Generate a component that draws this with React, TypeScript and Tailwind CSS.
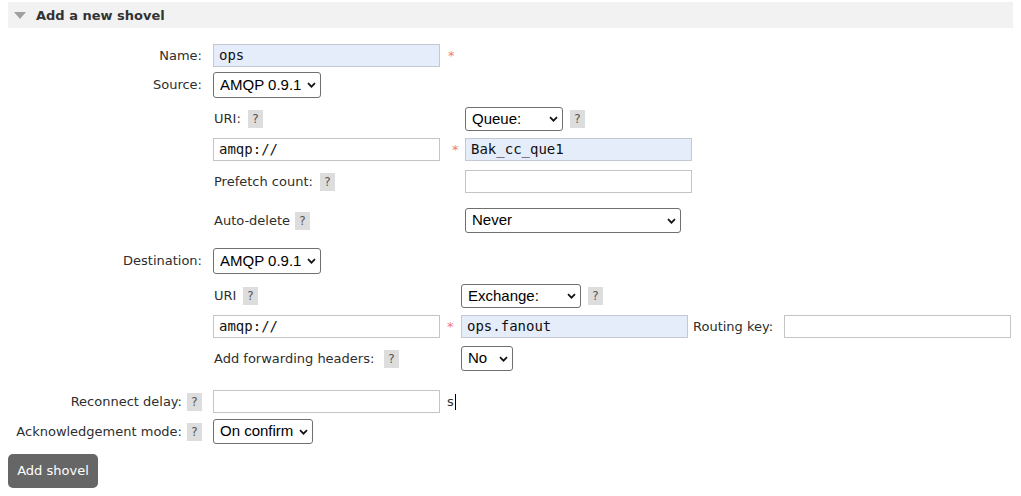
import React from 'react';

const Help: React.FC<{ className?: string }> = ({ className = '' }) => (
  <span
    className={`inline-flex h-[18px] w-[15px] shrink-0 items-center justify-center bg-[#dddddd] text-[12px] leading-none text-[#555] ${className}`}
  >
    ?
  </span>
);

const Star: React.FC<{ className?: string }> = ({ className = '' }) => (
  <span className={`text-[13px] leading-none text-[#f47a7a] ${className}`}>*</span>
);

// text box drawn as a div so the mono underscores are not clipped
const TextInput: React.FC<{ value?: string; mand?: boolean }> = ({ value = '', mand }) => (
  <div
    role="textbox"
    className={`flex h-[23px] w-[227px] shrink-0 items-center overflow-hidden whitespace-pre border px-[5px] font-['DejaVu_Sans_Mono',monospace] text-[14px] leading-[19px] text-[#111] ${
      mand ? 'border-[#c3c9d2] bg-[#e5edfa]' : 'border-[#c4c4c4] bg-white'
    }`}
  >
    {value}
  </div>
);

interface SelectProps {
  value: string;
  options: string[];
  size: string;
}

const Select: React.FC<SelectProps> = ({ value, options, size }) => (
  <div className={`relative shrink-0 ${size}`}>
    <select
      defaultValue={value}
      className="h-full w-full appearance-none rounded-[3px] border border-[#6f6f6f] bg-white pl-[6px] font-['Liberation_Sans',Arial,sans-serif] text-[15px] text-black outline-none"
    >
      {options.map((o) => (
        <option key={o}>{o}</option>
      ))}
    </select>
    <svg
      className="pointer-events-none absolute right-[5px] top-1/2 -translate-y-1/2"
      width="9"
      height="6"
      viewBox="0 0 9 6"
    >
      <path d="M1 1.2 L4.5 4.7 L8 1.2" fill="none" stroke="#111" strokeWidth="1.7" />
    </svg>
  </div>
);

const Row: React.FC<{ className: string; label?: React.ReactNode; children: React.ReactNode }> = ({
  className,
  label,
  children,
}) => (
  <div className={`flex items-center ${className}`}>
    <div className="flex w-[195px] shrink-0 items-center justify-end gap-[5px] pr-[1px]">{label}</div>
    <div className="ml-[10px] flex items-center">{children}</div>
  </div>
);

const App: React.FC = () => {
  return (
    <div className="min-h-[496px] bg-white px-[8px] pt-[2px] font-['DejaVu_Sans',Verdana,sans-serif] text-[13px] text-[#2e2e2e]">
      {/* section header */}
      <div className="flex h-[26px] items-center bg-[#f2f2f2] pl-[6px]">
        <svg width="12" height="7" viewBox="0 0 12 7">
          <polygon points="0,0 12,0 6,7" fill="#a0a0a0" />
        </svg>
        <h2 className="ml-[10px] mt-[1px] text-[13px] font-bold text-[#333]">Add a new shovel</h2>
      </div>

      <Row className="mt-[16px] h-[23px]" label={<span>Name:</span>}>
        <TextInput value="ops" mand />
        <Star className="ml-[8px]" />
      </Row>

      <Row className="mt-[5px] h-[26px]" label={<span>Source:</span>}>
        <Select value="AMQP 0.9.1" options={['AMQP 0.9.1', 'AMQP 1.0']} size="h-[26px] w-[108px]" />
      </Row>

      {/* source details */}
      <Row className="mt-[9px] h-[24px]">
        <div className="flex w-[252px] items-center pl-[1px]">
          <span className="w-[34px]">URI:</span>
          <Help />
        </div>
        <Select value="Queue:" options={['Queue:', 'Exchange:']} size="h-[24px] w-[98px]" />
        <Help className="ml-[7px]" />
      </Row>
      <Row className="mt-[7px] h-[23px]">
        <TextInput value="amqp://" />
        <div className="w-[25px] pl-[12px]">
          <Star />
        </div>
        <TextInput value="Bak_cc_que1" mand />
      </Row>
      <Row className="mt-[9px] h-[23px]">
        <div className="flex w-[252px] items-center pl-[1px]">
          <span className="w-[106px] whitespace-nowrap">Prefetch count:</span>
          <Help />
        </div>
        <TextInput />
      </Row>
      <Row className="mt-[15px] h-[25px]">
        <div className="flex w-[252px] items-center pl-[1px]">
          <span className="w-[81px]">Auto-delete</span>
          <Help />
        </div>
        <Select
          value="Never"
          options={['Never', 'After initial length transferred', 'On confirm']}
          size="h-[25px] w-[216px]"
        />
      </Row>

      <Row className="mt-[15px] h-[26px]" label={<span>Destination:</span>}>
        <Select value="AMQP 0.9.1" options={['AMQP 0.9.1', 'AMQP 1.0']} size="h-[26px] w-[108px]" />
      </Row>

      {/* destination details */}
      <Row className="mt-[10px] h-[24px]">
        <div className="flex w-[248px] items-center pl-[1px]">
          <span className="w-[29px]">URI</span>
          <Help />
        </div>
        <Select value="Exchange:" options={['Exchange:', 'Queue:']} size="h-[24px] w-[120px]" />
        <Help className="ml-[7px]" />
      </Row>
      <Row className="mt-[7px] h-[23px]">
        <TextInput value="amqp://" />
        <div className="w-[21px] pl-[7px]">
          <Star />
        </div>
        <TextInput value="ops.fanout" mand />
        <span className="ml-[5px] w-[91px] whitespace-nowrap">Routing key:</span>
        <TextInput />
      </Row>
      <Row className="mt-[8px] h-[25px]">
        <div className="flex w-[248px] items-center pl-[1px]">
          <span className="w-[170px] whitespace-nowrap">Add forwarding headers:</span>
          <Help />
        </div>
        <Select value="No" options={['No', 'Yes']} size="h-[25px] w-[52px]" />
      </Row>

      <Row
        className="mt-[19px] h-[23px]"
        label={
          <>
            <span className="whitespace-nowrap">Reconnect delay:</span>
            <Help />
          </>
        }
      >
        <TextInput />
        <span className="ml-[7px]">s</span>
        <span className="ml-[1px] h-[16px] w-px bg-black" />
      </Row>

      <Row
        className="mt-[6px] h-[25px]"
        label={
          <>
            <span className="whitespace-nowrap">Acknowledgement mode:</span>
            <Help />
          </>
        }
      >
        <Select
          value="On confirm"
          options={['On confirm', 'On publish', 'No ack']}
          size="h-[25px] w-[100px]"
        />
      </Row>

      <button className="mt-[10px] h-[34px] w-[90px] rounded-[5px] bg-[#666] text-[13px] text-white">
        Add shovel
      </button>
    </div>
  );
};

export default App;
